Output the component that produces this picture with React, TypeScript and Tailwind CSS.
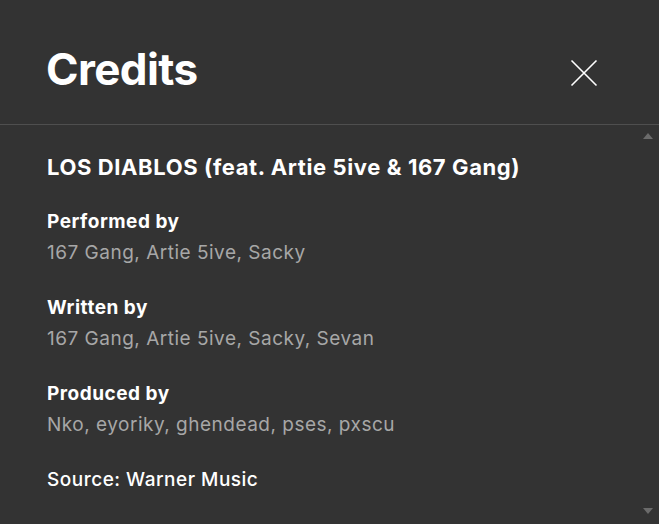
const sections = [
  { label: "Performed by", names: "167 Gang, Artie 5ive, Sacky" },
  { label: "Written by", names: "167 Gang, Artie 5ive, Sacky, Sevan" },
  { label: "Produced by", names: "Nko, eyoriky, ghendead, pses, pxscu" },
];

export default function App() {
  return (
    <div
      className="w-[659px] h-[524px] bg-[#333333] flex flex-col overflow-hidden text-white"
      style={{ fontFamily: "Inter, 'Noto Sans', sans-serif" }}
    >
      {/* Header */}
      <header className="h-[125px] shrink-0 flex items-center justify-between pl-[46px] pr-[61px] pt-[14px] border-b border-[#4f4f4f]">
        <h1 className="text-[44px] font-bold tracking-[-0.6px] leading-none">Credits</h1>
        <button className="w-[28px] h-[28px] flex items-center justify-center mt-[8px]">
          <svg width="28" height="28" viewBox="0 0 28 28" fill="none">
            <path d="M1.5 1.5 L26.5 26.5 M26.5 1.5 L1.5 26.5" stroke="white" strokeWidth="1.6" />
          </svg>
        </button>
      </header>

      {/* Body */}
      <div className="relative flex-1">
        <div className="pl-[47px] pt-[27px]">
          <h2 className="text-[22px] font-bold leading-[30px] tracking-[0.6px]">
            LOS DIABLOS (feat. Artie 5ive &amp; 167 Gang)
          </h2>
          <div className="mt-[24px] flex flex-col gap-[24px]">
            {sections.map((s) => (
              <div key={s.label}>
                <div className="text-[19px] font-bold leading-[31px] tracking-[0.5px]">{s.label}</div>
                <div className="text-[19px] leading-[31px] text-[#a7a7a7] tracking-[0.5px]">{s.names}</div>
              </div>
            ))}
            <div className="text-[19px] font-medium leading-[31px] tracking-[0.5px]">Source: Warner Music</div>
          </div>
        </div>

        {/* Scrollbar arrows */}
        <div className="absolute right-[6px] top-[8px] w-0 h-0 border-l-[5px] border-r-[5px] border-b-[6px] border-l-transparent border-r-transparent border-b-[#6b6b6b]" />
        <div className="absolute right-[6px] bottom-[10px] w-0 h-0 border-l-[5px] border-r-[5px] border-t-[6px] border-l-transparent border-r-transparent border-t-[#6b6b6b]" />
      </div>
    </div>
  );
}
